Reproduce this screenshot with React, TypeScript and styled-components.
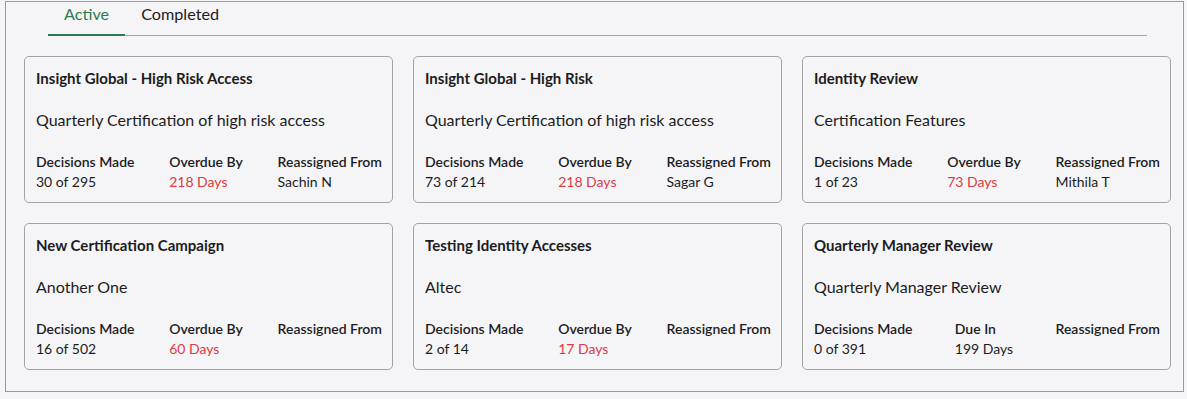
import React from "react";
import styled, { createGlobalStyle } from "styled-components";

const GlobalStyle = createGlobalStyle`
    body {
        margin: 0;
        background: #f5f5f7;
        font-family: Lato, "Noto Sans", sans-serif;
        color: #1c1c1e;
    }
`;

const Frame = styled.div`
    box-sizing: border-box;
    width: 1179px;
    margin: 1px 0 0 5px;
    border: 1px solid #9a9a9a;
    background: #f5f5f7;
    padding: 0 11px 21px 18px;
`;

const TabBar = styled.div`
    display: flex;
    margin: 0 25px 0 24px;
    border-bottom: 1px solid #a8a8a8;
    height: 33px;
`;

const Tab = styled.div<{ active?: boolean }>`
    padding: 1px 16px 0;
    font-size: 16.2px;
    line-height: 22px;
    color: ${p => (p.active ? "#2d7a4e" : "#1c1c1e")};
    border-bottom: 2px solid ${p => (p.active ? "#2d7a4e" : "transparent")};
    margin-bottom: -1px;
`;

const Grid = styled.div`
    display: grid;
    grid-template-columns: repeat(3, 369px);
    grid-auto-rows: 147px;
    gap: 20px;
    margin-top: 20px;
`;

const Card = styled.div`
    box-sizing: border-box;
    border: 1px solid #a3a3a3;
    border-radius: 5px;
    padding: 11px 10px 10px 11px;
    display: flex;
    flex-direction: column;
`;

const Title = styled.div`
    font-size: 15px;
    font-weight: 700;
    line-height: 20px;
`;

const Subtitle = styled.div`
    font-size: 16px;
    line-height: 22px;
    margin-top: 21px;
`;

const Stats = styled.div`
    display: flex;
    justify-content: space-between;
    margin-top: 21px;
`;

const Stat = styled.div`
    display: flex;
    flex-direction: column;
`;

const Label = styled.div`
    font-size: 14px;
    font-weight: 600;
    line-height: 20px;
`;

const Value = styled.div<{ overdue?: boolean }>`
    font-size: 14px;
    line-height: 20px;
    min-height: 20px;
    color: ${p => (p.overdue ? "#dd3a3f" : "#1c1c1e")};
`;

type Campaign = {
    title: string;
    subtitle: string;
    made: string;
    dueLabel: string;
    days: string;
    overdue: boolean;
    from: string;
};

const campaigns: Campaign[] = [
    { title: "Insight Global - High Risk Access", subtitle: "Quarterly Certification of high risk access", made: "30 of 295", dueLabel: "Overdue By", days: "218 Days", overdue: true, from: "Sachin N" },
    { title: "Insight Global - High Risk", subtitle: "Quarterly Certification of high risk access", made: "73 of 214", dueLabel: "Overdue By", days: "218 Days", overdue: true, from: "Sagar G" },
    { title: "Identity Review", subtitle: "Certification Features", made: "1 of 23", dueLabel: "Overdue By", days: "73 Days", overdue: true, from: "Mithila T" },
    { title: "New Certification Campaign", subtitle: "Another One", made: "16 of 502", dueLabel: "Overdue By", days: "60 Days", overdue: true, from: "" },
    { title: "Testing Identity Accesses", subtitle: "Altec", made: "2 of 14", dueLabel: "Overdue By", days: "17 Days", overdue: true, from: "" },
    { title: "Quarterly Manager Review", subtitle: "Quarterly Manager Review", made: "0 of 391", dueLabel: "Due In", days: "199 Days", overdue: false, from: "" },
];

export default function App() {
    return (
        <>
            <GlobalStyle />
            <Frame>
                <TabBar>
                    <Tab active>Active</Tab>
                    <Tab>Completed</Tab>
                </TabBar>
                <Grid>
                    {campaigns.map(c => (
                        <Card key={c.title}>
                            <Title>{c.title}</Title>
                            <Subtitle>{c.subtitle}</Subtitle>
                            <Stats>
                                <Stat>
                                    <Label>Decisions Made</Label>
                                    <Value>{c.made}</Value>
                                </Stat>
                                <Stat>
                                    <Label>{c.dueLabel}</Label>
                                    <Value overdue={c.overdue}>{c.days}</Value>
                                </Stat>
                                <Stat>
                                    <Label>Reassigned From</Label>
                                    <Value>{c.from}</Value>
                                </Stat>
                            </Stats>
                        </Card>
                    ))}
                </Grid>
            </Frame>
        </>
    );
}
